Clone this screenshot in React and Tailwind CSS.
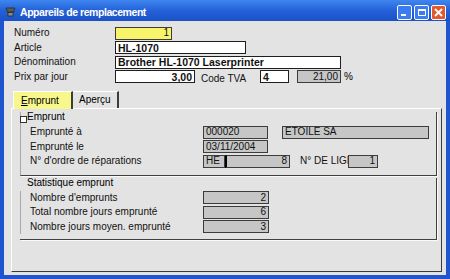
import React from 'react';

const font = "font-['Liberation_Sans',Arial,sans-serif]";

const tones = {
    white: 'bg-white border-[#1e1e1e]',
    gray: 'bg-[#c6c6c6] border-[#3c3c3c]',
    yellow: 'bg-[#f7f36a] border-[#3c3c3c]',
};

const Field = ({ w, value, tone = 'white', bold, right, extra = '' }) => (
    <div
        className={`${w} h-[13px] border ${tones[tone]} ${extra} flex items-center px-[2px] text-[#111] leading-none whitespace-nowrap overflow-hidden ${
            right ? 'justify-end' : ''
        } ${bold ? 'font-bold text-[10.5px]' : 'text-[10px]'}`}
    >
        {value}
    </div>
);

const Row = ({ children }) => <div className="h-[14.5px] flex items-center">{children}</div>;

const Label = ({ w, children }) => (
    <span className={`${w} shrink-0 text-[10px] leading-none text-[#111] whitespace-nowrap`}>{children}</span>
);

const TitleButton = ({ kind }) => {
    const close = kind === 'close';
    return (
        <div
            className={`w-[15px] h-[15px] rounded-[2px] border border-white flex items-center justify-center ${
                close ? 'bg-[#e2582f]' : 'bg-[#3b7df0]'
            }`}
        >
            {kind === 'min' && <div className="w-[5px] h-[2px] bg-white mt-[6px] -ml-[3px]" />}
            {kind === 'max' && <div className="w-[8px] h-[7px] border border-white border-t-2" />}
            {close && (
                <svg width="9" height="9" viewBox="0 0 9 9">
                    <path d="M1 1 L8 8 M8 1 L1 8" stroke="white" strokeWidth="1.8" />
                </svg>
            )}
        </div>
    );
};

export default function App() {
    return (
        <div className={`${font} w-[450px] h-[279px] flex flex-col bg-[#1f55cf] overflow-hidden`}>
            {/* title bar */}
            <div className="h-[21px] shrink-0 flex items-center pt-[3px] pl-[5px] pr-[4px] bg-gradient-to-b from-[#3f86f0] via-[#2461d8] to-[#1c51c6]">
                <svg width="11" height="10" viewBox="0 0 11 10" className="shrink-0">
                    <path d="M1 1 H10 L8.5 5 H2.5 Z" fill="#5a5a5a" stroke="#2a2a2a" strokeWidth="0.8" />
                    <rect x="3" y="5.5" width="5" height="3.5" fill="#8a8a8a" stroke="#2a2a2a" strokeWidth="0.8" />
                </svg>
                <span className="ml-[4px] text-white font-bold text-[10.5px] tracking-[-0.45px] leading-none">
                    Appareils de remplacement
                </span>
                <div className="ml-auto flex gap-[2px]">
                    <TitleButton kind="min" />
                    <TitleButton kind="max" />
                    <TitleButton kind="close" />
                </div>
            </div>

            {/* body */}
            <div className="flex-1 mx-[4px] mb-[4px] bg-[#e3e3e3] flex flex-col">
                <div className="pl-[10px] pt-[5px]">
                    <Row>
                        <Label w="w-[101px]">Numéro</Label>
                        <Field w="w-[57px]" tone="yellow" value="1" right />
                    </Row>
                    <Row>
                        <Label w="w-[101px]">Article</Label>
                        <Field w="w-[131px]" value="HL-1070" bold />
                    </Row>
                    <Row>
                        <Label w="w-[101px]">Dénomination</Label>
                        <Field w="w-[226px]" value="Brother HL-1070 Laserprinter" bold />
                    </Row>
                    <Row>
                        <Label w="w-[101px]">Prix par jour</Label>
                        <Field w="w-[80px]" value="3,00" bold right />
                        <span className="ml-[6px]">
                            <Label w="w-[59px] inline-block">Code TVA</Label>
                        </span>
                        <Field w="w-[29px]" value="4" bold />
                        <Field w="w-[44px]" extra="ml-[8px]" tone="gray" value="21,00" right />
                        <span className="ml-[3px] text-[10px] leading-none">%</span>
                    </Row>
                </div>

                {/* tabs */}
                <div className="mt-[7px] h-[17px] flex pl-[9px] text-[10px] leading-none">
                    <div className="w-[60px] h-[18px] bg-[#f7f78c] border-t border-l border-white border-r-2 border-r-[#3c3c3c] flex items-center pl-[7px] relative z-10">
                        <span>
                            <span className="underline">E</span>mprunt
                        </span>
                    </div>
                    <div className="w-[46px] h-full border-t border-white border-r-2 border-r-[#3c3c3c] flex items-center pl-[6px]">
                        Aperçu
                    </div>
                </div>

                {/* tab panel */}
                <div className="flex-1 ml-[7px] mr-[4px] mb-[3px] border-t border-l border-white border-r border-b border-r-[#3a3a3a] border-b-[#3a3a3a] pt-[3px] pl-[8px] pr-[4px] flex flex-col">
                    <div className="border-l border-l-[#a8a8a8] border-r border-b border-r-[#404040] border-b-[#404040] shadow-[1px_1px_0_#fafafa] pb-[6px]">
                        <div className="h-[10px] flex items-center -ml-px">
                            <div className="w-[7px] h-[7px] border border-[#333] bg-white mt-[5px]" />
                            <span className="text-[10px] leading-none">Emprunt</span>
                        </div>
                        <div className="mt-[3px] pl-[9px]">
                            <Row>
                                <Label w="w-[173px]">Emprunté à</Label>
                                <Field w="w-[65px]" tone="gray" value="000020" />
                                <Field w="w-[147px]" extra="ml-[14px]" tone="gray" value="ETOILE SA" />
                            </Row>
                            <Row>
                                <Label w="w-[173px]">Emprunté le</Label>
                                <Field w="w-[65px]" tone="gray" value="03/11/2004" />
                            </Row>
                            <Row>
                                <Label w="w-[173px]">N° d'ordre de réparations</Label>
                                <Field w="w-[22px]" tone="gray" value="HE" />
                                <Field w="w-[65px]" tone="gray" extra="border-l-2 border-l-black" value="8" right />
                                <span className="ml-[10px] w-[48px] overflow-hidden">
                                    <Label w="w-[60px] block">N° DE LIGNE</Label>
                                </span>
                                <Field w="w-[30px]" tone="gray" value="1" right />
                            </Row>
                        </div>
                    </div>

                    <div className="mt-[2px] border-r border-b border-r-[#404040] border-b-[#404040] shadow-[1px_1px_0_#fafafa] pb-[5px]">
                        <div className="h-[10px] flex items-center pl-[7px]">
                            <span className="text-[10px] leading-none">Statistique emprunt</span>
                        </div>
                        <div className="mt-[3px] pl-[9px] border-l border-l-[#a8a8a8]">
                            <Row>
                                <Label w="w-[173px]">Nombre d'emprunts</Label>
                                <Field w="w-[66px]" tone="gray" value="2" right />
                            </Row>
                            <Row>
                                <Label w="w-[173px]">Total nombre jours emprunté</Label>
                                <Field w="w-[66px]" tone="gray" value="6" right />
                            </Row>
                            <Row>
                                <Label w="w-[173px]">Nombre jours moyen. emprunté</Label>
                                <Field w="w-[66px]" tone="gray" value="3" right />
                            </Row>
                        </div>
                    </div>
                </div>
            </div>
        </div>
    );
}
